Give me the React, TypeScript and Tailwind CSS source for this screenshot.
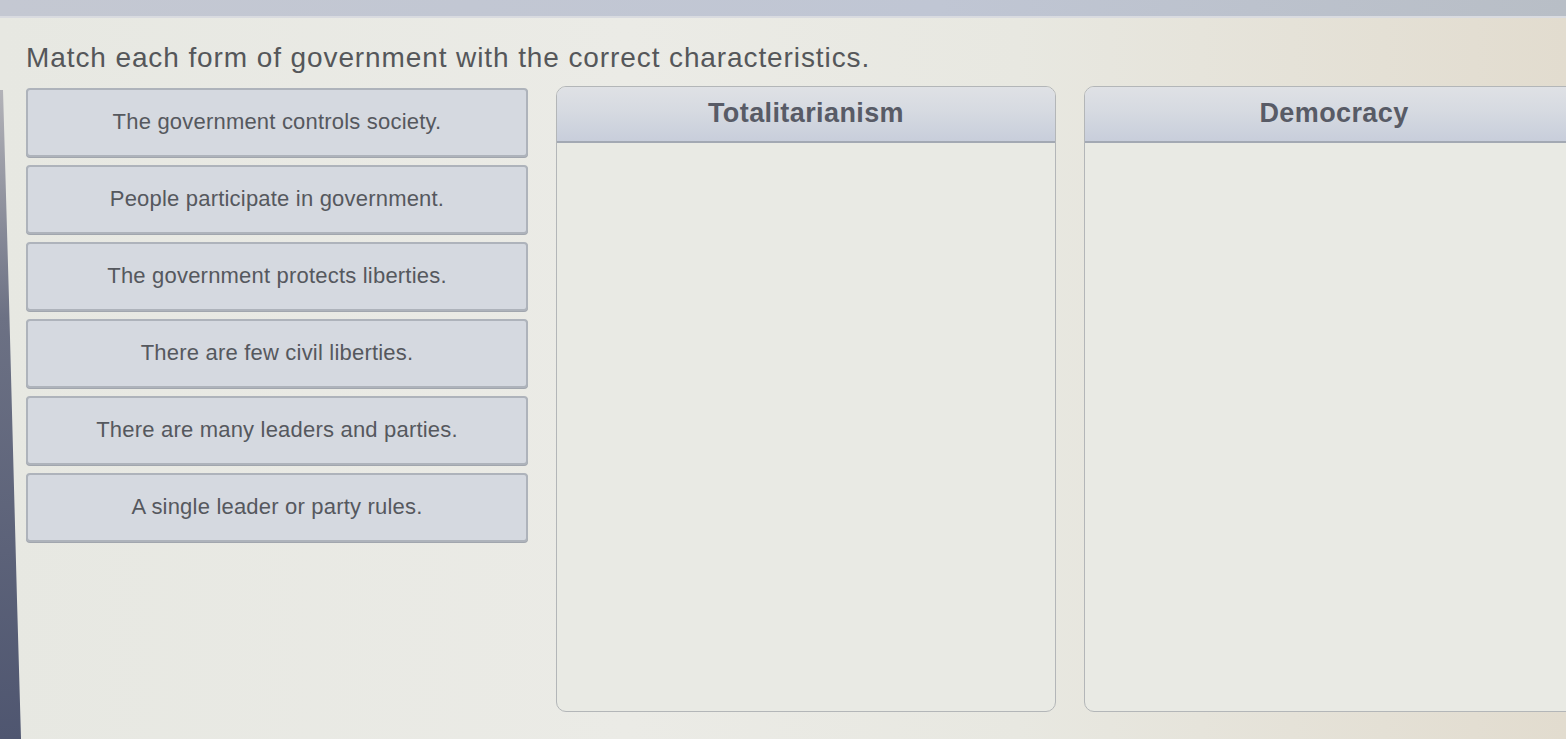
import React from "react";

const items = [
  "The government controls society.",
  "People participate in government.",
  "The government protects liberties.",
  "There are few civil liberties.",
  "There are many leaders and parties.",
  "A single leader or party rules.",
];

function DropZone({ title }: { title: string }) {
  return (
    <div className="flex h-[626px] w-[500px] shrink-0 flex-col overflow-hidden rounded-[10px] border border-[#b3b6b8] bg-[#e9eae4]">
      <div className="flex h-[56px] items-center justify-center border-b-2 border-[#a3a9b3] bg-[linear-gradient(180deg,#dfe1e5_0%,#d6dae1_45%,#c8cedb_100%)]">
        <span className="pb-[2px] text-[27px] font-bold tracking-[0.4px] text-[#585b66]">{title}</span>
      </div>
      <div className="flex-1" />
    </div>
  );
}

export default function App() {
  return (
    <div
      className="relative h-[739px] w-[1566px] overflow-hidden bg-[linear-gradient(90deg,#e7e8e2_0%,#ebebe6_40%,#e8e8e1_65%,#e2dccf_100%)]"
      style={{ fontFamily: '"Liberation Sans", Arial, sans-serif' }}
    >
      {/* monitor top strip */}
      <div className="h-[16px] w-full bg-[linear-gradient(90deg,#c4c8d2_0%,#c0c6d4_60%,#b8bec6_100%)]" />
      <div className="h-[2px] w-full bg-[#d9dbe0]" />

      <div className="pl-[26px] pt-[24px]">
        <h1 className="text-[28px] leading-[32px] tracking-[0.9px] text-[#55575a]">
          Match each form of government with the correct characteristics.
        </h1>

        <div className="mt-[12px] flex items-start gap-[28px]">
          <div className="mt-[2px] flex w-[502px] shrink-0 flex-col gap-[8px]">
            {items.map((t) => (
              <div
                key={t}
                className="flex h-[69px] items-center justify-center rounded-[4px] border-2 border-[#aeb3bb] bg-[#d5d9e0] pb-[2px] text-[22px] tracking-[0.2px] text-[#55585e] shadow-[0_1px_0_#a1a6ae]"
              >
                {t}
              </div>
            ))}
          </div>

          <DropZone title="Totalitarianism" />
          <DropZone title="Democracy" />
        </div>
      </div>

      {/* dark screen bezel along the left edge */}
      <svg className="absolute left-0 top-0 h-[739px] w-[24px]" viewBox="0 0 24 739" preserveAspectRatio="none">
        <defs>
          <linearGradient id="bezel" x1="0" y1="0" x2="0" y2="1">
            <stop offset="0" stopColor="#b3b3b8" />
            <stop offset="0.35" stopColor="#6c7184" />
            <stop offset="1" stopColor="#4f5670" />
          </linearGradient>
        </defs>
        <polygon points="0,90 3,90 9,300 17,600 21,739 0,739" fill="url(#bezel)" />
      </svg>
    </div>
  );
}
